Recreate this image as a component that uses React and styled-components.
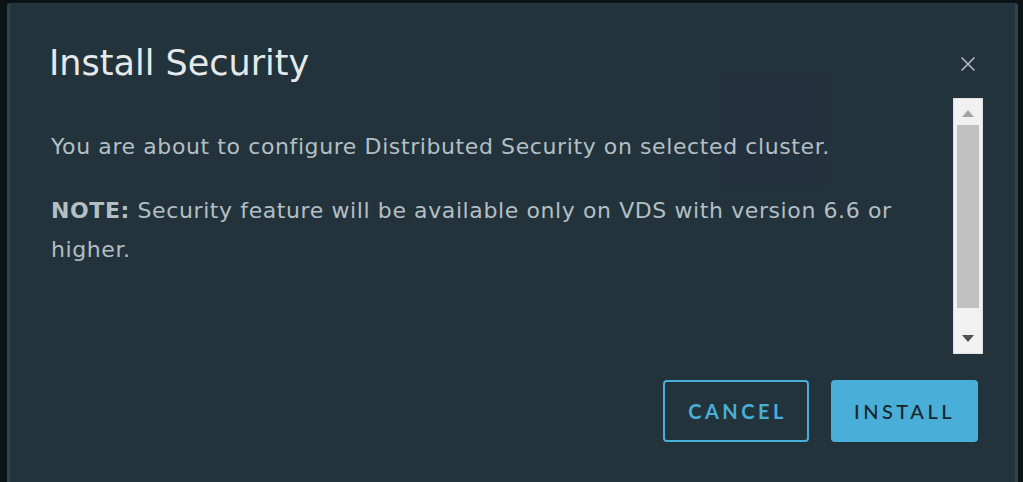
import React from 'react'
import styled, { createGlobalStyle } from 'styled-components'

const GlobalStyle = createGlobalStyle`
  html, body {
    margin: 0;
    padding: 0;
    height: 100%;
    background: #0c1316;
    overflow: hidden;
  }
  #root {
    height: 100%;
  }
`

const Backdrop = styled.div`
  height: 100%;
  padding: 3px 5px 0 7px;
  box-sizing: border-box;
  background: #0c1316;
`

const Modal = styled.div`
  position: relative;
  height: 520px;
  box-sizing: border-box;
  background: #22333c;
  border-left: 3px solid #2c4454;
  border-right: 3px solid #2c4454;
  border-top: 1px solid #26394a;
  border-radius: 3px 3px 0 0;
  padding: 37px 32px 0 39px;
  font-family: "DejaVu Sans", Lato, sans-serif;
`

const Ghost = styled.div`
  position: absolute;
  left: 709px;
  top: 71px;
  width: 108px;
  height: 111px;
  background: rgba(40, 44, 70, 0.25);
  pointer-events: none;
`

const Header = styled.div`
  display: flex;
  align-items: flex-start;
  justify-content: space-between;
`

const Title = styled.h1`
  margin: 0;
  font-size: 35px;
  font-weight: 400;
  color: #e6e9ea;
  line-height: 44px;
`

const Close = styled.button`
  background: none;
  border: none;
  padding: 0;
  margin: 15px 7px 0 0;
  width: 16px;
  height: 16px;
  cursor: pointer;
  display: flex;
`

const BodyRow = styled.div`
  position: relative;
  display: flex;
  margin-top: 13px;
  gap: 10px;
`

const Content = styled.div`
  flex: 1;
  padding: 29px 0 0 2px;
  color: #b4bfc4;
  font-size: 22px;
  letter-spacing: 0.6px;
  line-height: 39px;
`

const Para = styled.p`
  margin: 0 0 25px 0;
`

const Scrollbar = styled.div`
  width: 30px;
  height: 256px;
  box-sizing: border-box;
  background: #f1f1f1;
  border: 1px solid #e0e0e0;
  display: flex;
  flex-direction: column;
  align-items: center;
  padding: 3px 3px;
`

const Arrow = styled.div`
  height: 23px;
  width: 100%;
  display: flex;
  align-items: center;
  justify-content: center;
`

const Thumb = styled.div`
  width: 100%;
  flex: 1;
  background: #c1c1c1;
  margin-bottom: 19px;
`

const Footer = styled.div`
  display: flex;
  justify-content: flex-end;
  gap: 22px;
  margin-top: 26px;
  padding-right: 5px;
`

const Button = styled.button`
  height: 62px;
  box-sizing: border-box;
  border-radius: 4px;
  border: 2px solid #49afd9;
  background: ${p => (p.primary ? '#49afd9' : 'transparent')};
  color: ${p => (p.primary ? '#17252d' : '#49afd9')};
  width: ${p => (p.primary ? '147px' : '146px')};
  padding: 0 0 0 ${p => (p.primary ? '0' : '3px')};
  font-family: Lato, "Open Sans", sans-serif;
  font-size: 20px;
  font-weight: ${p => (p.primary ? 500 : 700)};
  letter-spacing: 3.5px;
  text-transform: uppercase;
  cursor: pointer;
`

export default function App() {
  return (
    <Backdrop>
      <GlobalStyle />
      <Modal>
        <Ghost />
        <Header>
          <Title>Install Security</Title>
          <Close aria-label="Close">
            <svg width="16" height="16" viewBox="0 0 16 16">
              <path d="M1.5 1.5 L14.5 14.5 M14.5 1.5 L1.5 14.5" stroke="#b3bcc0" strokeWidth="1.6" fill="none" />
            </svg>
          </Close>
        </Header>
        <BodyRow>
          <Content>
            <Para>You are about to configure Distributed Security on selected cluster.</Para>
            <Para>
              <strong>NOTE:</strong> Security feature will be available only on VDS with version 6.6 or higher.
            </Para>
          </Content>
          <Scrollbar>
            <Arrow>
              <svg width="12" height="7" viewBox="0 0 12 7"><path d="M6 0 L12 7 L0 7 Z" fill="#a3a3a3" /></svg>
            </Arrow>
            <Thumb />
            <Arrow>
              <svg width="12" height="7" viewBox="0 0 12 7"><path d="M0 0 L12 0 L6 7 Z" fill="#505050" /></svg>
            </Arrow>
          </Scrollbar>
        </BodyRow>
        <Footer>
          <Button>Cancel</Button>
          <Button primary>Install</Button>
        </Footer>
      </Modal>
    </Backdrop>
  )
}
